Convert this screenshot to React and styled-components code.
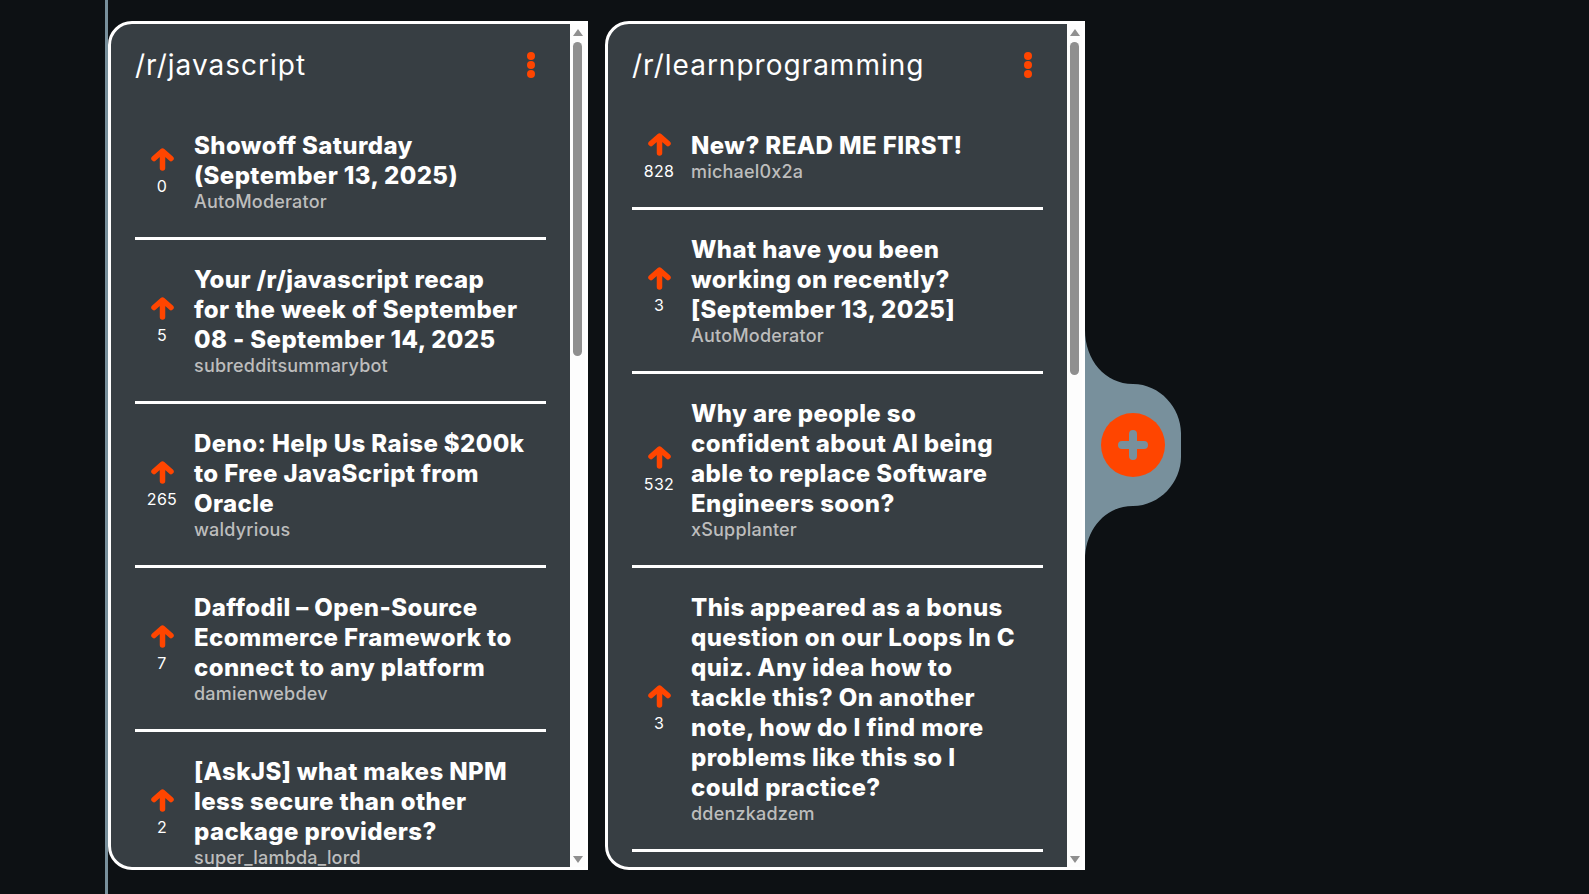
import React from "react";
import styled, { createGlobalStyle } from "styled-components";

const orange = "#ff4500";
const slate = "#78909c";

const columns = [
  {
    name: "javascript",
    thumb: 314,
    posts: [
      { score: 0, author: "AutoModerator", lines: ["Showoff Saturday", "(September 13, 2025)"] },
      {
        score: 5,
        author: "subredditsummarybot",
        lines: ["Your /r/javascript recap", "for the week of September", "08 - September 14, 2025"],
      },
      {
        score: 265,
        author: "waldyrious",
        lines: ["Deno: Help Us Raise $200k", "to Free JavaScript from", "Oracle"],
      },
      {
        score: 7,
        author: "damienwebdev",
        lines: ["Daffodil – Open-Source", "Ecommerce Framework to", "connect to any platform"],
      },
      {
        score: 2,
        author: "super_lambda_lord",
        lines: ["[AskJS] what makes NPM", "less secure than other", "package providers?"],
      },
    ],
  },
  {
    name: "learnprogramming",
    thumb: 333,
    posts: [
      { score: 828, author: "michael0x2a", lines: ["New? READ ME FIRST!"] },
      {
        score: 3,
        author: "AutoModerator",
        lines: ["What have you been", "working on recently?", "[September 13, 2025]"],
      },
      {
        score: 532,
        author: "xSupplanter",
        lines: [
          "Why are people so",
          "confident about AI being",
          "able to replace Software",
          "Engineers soon?",
        ],
      },
      {
        score: 3,
        author: "ddenzkadzem",
        lines: [
          "This appeared as a bonus",
          "question on our Loops In C",
          "quiz. Any idea how to",
          "tackle this? On another",
          "note, how do I find more",
          "problems like this so I",
          "could practice?",
        ],
      },
    ],
  },
];

function UpArrow() {
  return (
    <ArrowIcon viewBox="0 0 23 23">
      <path d="M11.5 20V4M3 10.5L11.5 3L20 10.5" />
    </ArrowIcon>
  );
}

function Post({ post }) {
  return (
    <Item>
      <Vote>
        <UpArrow />
        <Score>{post.score}</Score>
      </Vote>
      <Body>
        <Title>
          {post.lines.map((line) => (
            <TitleLine key={line}>{line}</TitleLine>
          ))}
        </Title>
        <Author>{post.author}</Author>
      </Body>
    </Item>
  );
}

function Column({ column }) {
  return (
    <Panel>
      <Feed>
        <Header>
          <Name>/r/{column.name}</Name>
          <Dots>
            <Dot />
            <Dot />
            <Dot />
          </Dots>
        </Header>
        {column.posts.map((post) => (
          <Post key={post.author + post.score} post={post} />
        ))}
      </Feed>
      <Scrollbar>
        <ScrollUp />
        <Track>
          <Thumb $height={column.thumb} />
        </Track>
        <ScrollDown />
      </Scrollbar>
    </Panel>
  );
}

export default function App() {
  return (
    <>
      <GlobalStyle />
      <Page>
        <Rail />
        <Board>
          {columns.map((column) => (
            <Column key={column.name} column={column} />
          ))}
          <AddTab>
            <TabShape viewBox="0 0 96 230">
              <path
                d="M0 0C0 30 20 54 48 54C75 54 96 78 96 103L96 127C96 152 75 176 48 176C20 176 0 200 0 230Z"
                fill={slate}
              />
            </TabShape>
            <AddButton>
              <PlusIcon viewBox="0 0 30 30">
                <path d="M15 4V26M4 15H26" />
              </PlusIcon>
            </AddButton>
          </AddTab>
        </Board>
      </Page>
    </>
  );
}

const GlobalStyle = createGlobalStyle`
  html, body {
    margin: 0;
    background: #0d1114;
  }
  * {
    box-sizing: border-box;
  }
`;

const Page = styled.div`
  display: flex;
  height: 100vh;
  overflow: hidden;
  font-family: Inter, "Noto Sans", sans-serif;
  color: #fff;
`;
const Rail = styled.div`
  width: 108px;
  flex-shrink: 0;
  border-right: 3px solid ${slate};
`;
const Board = styled.div`
  display: flex;
  gap: 17px;
  padding: 21px 0 24px 0;
`;
const Panel = styled.section`
  display: flex;
  width: 480px;
  overflow: hidden;
  background: #373e43;
  border: 3px solid #fff;
  border-radius: 24px 0 0 24px;
`;
const Feed = styled.div`
  flex: 1;
  min-width: 0;
  overflow: hidden;
  padding: 0 24px;
`;
const Header = styled.header`
  display: flex;
  align-items: center;
  justify-content: space-between;
  height: 82px;
`;
const Name = styled.h2`
  margin: 0;
  font-size: 28px;
  font-weight: 400;
  letter-spacing: 1px;
`;
const Dots = styled.div`
  display: flex;
  flex-direction: column;
  gap: 1px;
  margin-right: 11px;
`;
const Dot = styled.span`
  width: 8px;
  height: 8px;
  border-radius: 50%;
  background: ${orange};
`;
const Item = styled.article`
  display: flex;
  align-items: center;
  padding: 25px 0 23px;
  border-bottom: 3px solid #fff;
`;
const Vote = styled.div`
  display: flex;
  flex-direction: column;
  align-items: center;
  gap: 5px;
  width: 54px;
  flex-shrink: 0;
  margin: -2px 5px 0 0;
`;
const ArrowIcon = styled.svg`
  width: 23px;
  height: 23px;
  fill: none;
  stroke: ${orange};
  stroke-width: 5.5;
  stroke-linecap: round;
  stroke-linejoin: round;
`;
const Score = styled.span`
  font-size: 16px;
  line-height: 20px;
  letter-spacing: 0.3px;
`;
const Body = styled.div`
  min-width: 0;
`;
const Title = styled.h3`
  margin: 0;
  font-size: 24px;
  font-weight: 800;
  line-height: 30px;
  letter-spacing: 0.4px;
`;
const TitleLine = styled.span`
  display: block;
  white-space: nowrap;
`;
const Author = styled.div`
  height: 24px;
  margin-top: -1px;
  font-size: 18px;
  font-weight: 500;
  line-height: 24px;
  letter-spacing: 0.2px;
  color: #bdbdbd;
`;
const Scrollbar = styled.div`
  display: flex;
  flex-direction: column;
  align-items: center;
  width: 15px;
  flex-shrink: 0;
  background: #fdfdfd;
`;
const ScrollUp = styled.span`
  width: 0;
  height: 0;
  margin: 5px 0 6px;
  border-left: 5px solid transparent;
  border-right: 5px solid transparent;
  border-bottom: 7px solid #8f8f8f;
`;
const ScrollDown = styled.span`
  width: 0;
  height: 0;
  margin: 6px 0 4px;
  border-left: 5px solid transparent;
  border-right: 5px solid transparent;
  border-top: 7px solid #8f8f8f;
`;
const Track = styled.div`
  flex: 1;
  width: 9px;
`;
const Thumb = styled.div`
  height: ${(props) => props.$height}px;
  border-radius: 5px;
  background: #8f8f8f;
`;
const AddTab = styled.div`
  position: relative;
  align-self: center;
  display: flex;
  align-items: center;
  justify-content: center;
  width: 96px;
  height: 230px;
  margin: -1px 0 0 -17px;
`;
const TabShape = styled.svg`
  position: absolute;
  inset: 0;
  width: 100%;
  height: 100%;
`;
const AddButton = styled.div`
  position: relative;
  display: flex;
  align-items: center;
  justify-content: center;
  width: 64px;
  height: 64px;
  border-radius: 50%;
  background: ${orange};
`;
const PlusIcon = styled.svg`
  width: 30px;
  height: 30px;
  fill: none;
  stroke: ${slate};
  stroke-width: 8;
  stroke-linecap: round;
`;
